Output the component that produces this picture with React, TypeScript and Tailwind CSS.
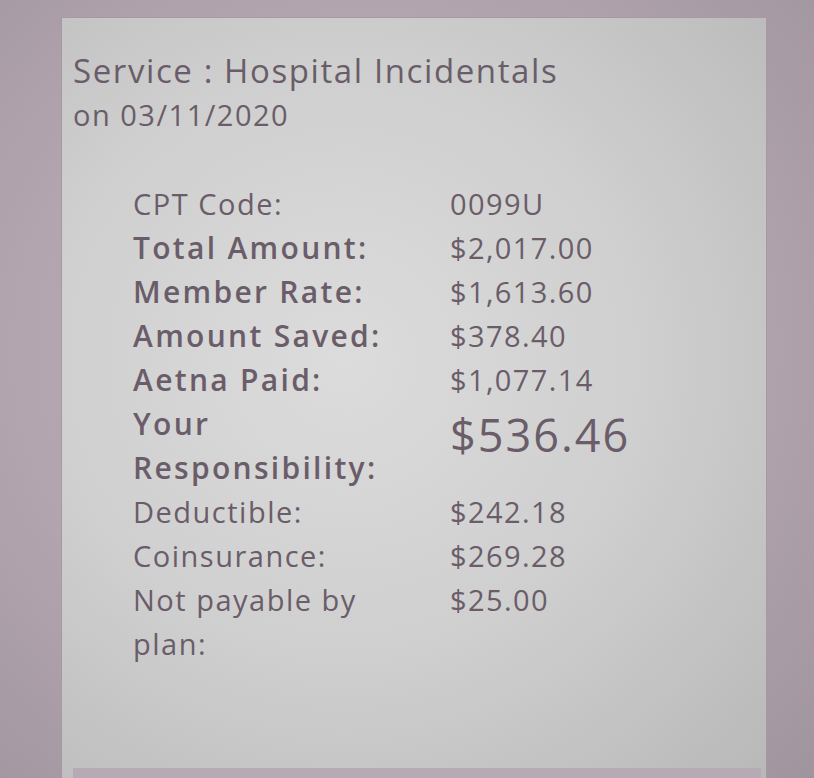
import React from "react";

const rows: { label: string; value: string; bold?: boolean; big?: boolean }[] = [
  { label: "CPT Code:", value: "0099U" },
  { label: "Total Amount:", value: "$2,017.00", bold: true },
  { label: "Member Rate:", value: "$1,613.60", bold: true },
  { label: "Amount Saved:", value: "$378.40", bold: true },
  { label: "Aetna Paid:", value: "$1,077.14", bold: true },
  { label: "Your Responsibility:", value: "$536.46", bold: true, big: true },
  { label: "Deductible:", value: "$242.18" },
  { label: "Coinsurance:", value: "$269.28" },
  { label: "Not payable by plan:", value: "$25.00" },
];

export default function App() {
  return (
    <div
      className="h-[778px] w-full overflow-hidden pl-[61px] pr-[47px] pt-[17px] bg-[radial-gradient(ellipse_at_45%_45%,#baadb8_0%,#b2a5b0_55%,#a0949e_100%)]"
      style={{ fontFamily: '"Open Sans", "Noto Sans", sans-serif' }}
    >
      <div className="flex h-full flex-col border-l border-r border-t border-[#a798a4] bg-[radial-gradient(ellipse_at_40%_45%,#dcdcdc_0%,#cfcfcf_50%,#b8b8b8_100%)] text-[#6a5d69]">
        <div className="pl-[11px] pt-[31px]">
          <div className="text-[33px] leading-[44px] tracking-[1.6px]">Service : Hospital Incidentals</div>
          <div className="text-[29px] leading-[44px] tracking-[1.5px]">on 03/11/2020</div>
        </div>
        <div className="mt-[45px] grid grid-cols-[317px_1fr] pl-[71px] text-[29px] leading-[44px]">
          {rows.map((r) => (
            <React.Fragment key={r.label}>
              <div
                className={
                  r.bold
                    ? "w-[300px] text-[30px] font-semibold tracking-[2.3px]"
                    : "w-[300px] tracking-[1.5px]"
                }
              >
                {r.label}
              </div>
              <div
                className={
                  r.big
                    ? "text-[45px] leading-[66px] tracking-[2px]"
                    : "tracking-[1.4px]"
                }
              >
                {r.value}
              </div>
            </React.Fragment>
          ))}
        </div>
        <div className="mt-auto ml-[11px] mr-[5px] h-[10px] bg-[#b6aab4]" />
      </div>
    </div>
  );
}
